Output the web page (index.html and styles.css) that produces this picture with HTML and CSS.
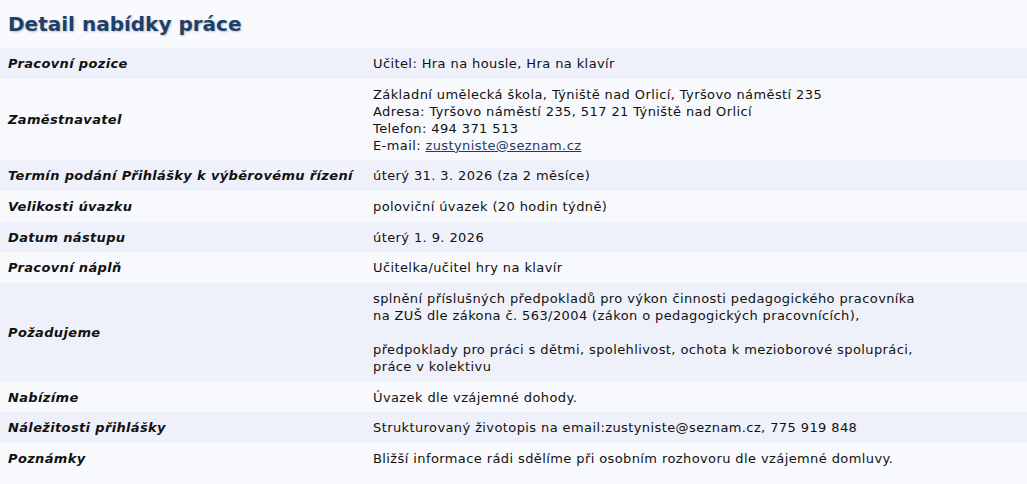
FILE: index.html
```html
<!DOCTYPE html>
<html lang="cs">
<head>
<meta charset="utf-8">
<title>Detail nabídky práce</title>
<link rel="stylesheet" href="styles.css">
</head>
<body>
<h1 class="title">Detail nabídky práce</h1>
<table class="detail">
  <tr class="odd"><th>Pracovní pozice</th><td>Učitel: Hra na housle, Hra na klavír</td></tr>
  <tr class="even"><th>Zaměstnavatel</th><td>Základní umělecká škola, Týniště nad Orlicí, Tyršovo náměstí 235<br>Adresa: Tyršovo náměstí 235, 517 21 Týniště nad Orlicí<br>Telefon: 494 371 513<br>E-mail: <a class="mail" href="#">zustyniste@seznam.cz</a></td></tr>
  <tr class="odd"><th>Termín podání Přihlášky k výběrovému řízení</th><td>úterý 31. 3. 2026 (za 2 měsíce)</td></tr>
  <tr class="even"><th>Velikosti úvazku</th><td>poloviční úvazek (20 hodin týdně)</td></tr>
  <tr class="odd"><th>Datum nástupu</th><td>úterý 1. 9. 2026</td></tr>
  <tr class="even"><th>Pracovní náplň</th><td>Učitelka/učitel hry na klavír</td></tr>
  <tr class="odd"><th>Požadujeme</th><td>splnění příslušných předpokladů pro výkon činnosti pedagogického pracovníka<br>na ZUŠ dle zákona č. 563/2004 (zákon o pedagogických pracovnících),<br><br>předpoklady pro práci s dětmi, spolehlivost, ochota k mezioborové spolupráci,<br>práce v kolektivu</td></tr>
  <tr class="even"><th>Nabízíme</th><td>Úvazek dle vzájemné dohody.</td></tr>
  <tr class="odd"><th>Náležitosti přihlášky</th><td>Strukturovaný životopis na email:zustyniste@seznam.cz, 775 919 848</td></tr>
  <tr class="even"><th>Poznámky</th><td>Bližší informace rádi sdělíme při osobním rozhovoru dle vzájemné domluvy.</td></tr>
</table>
</body>
</html>
```
FILE: styles.css
```css
html, body {
  margin: 0;
  padding: 0;
  background: #f9fafd;
}
body {
  font-family: "DejaVu Sans", Verdana, sans-serif;
  color: #111;
}
.title {
  margin: 0;
  padding: 11px 8px 10px;
  font-size: 20px;
  line-height: 27px;
  font-weight: bold;
  color: #1e4067;
  text-shadow: 1px 1px 2px #b9c1cc;
}
.detail {
  width: 100%;
  border-collapse: collapse;
}
.detail th,
.detail td {
  padding: 7px 8px 6.67px 8px;
  line-height: 17px;
  vertical-align: middle;
  text-align: left;
}
.detail th {
  width: 349px;
  font-size: 13px;
  letter-spacing: 0.35px;
  font-weight: bold;
  font-style: italic;
  white-space: nowrap;
}
.detail td {
  font-size: 13px;
  letter-spacing: 0.4px;
}
.detail .odd {
  background: #eff1fa;
}
.detail .even {
  background: #f8f9fd;
}
.mail {
  color: #1d3b66;
  text-decoration: underline;
}
```
